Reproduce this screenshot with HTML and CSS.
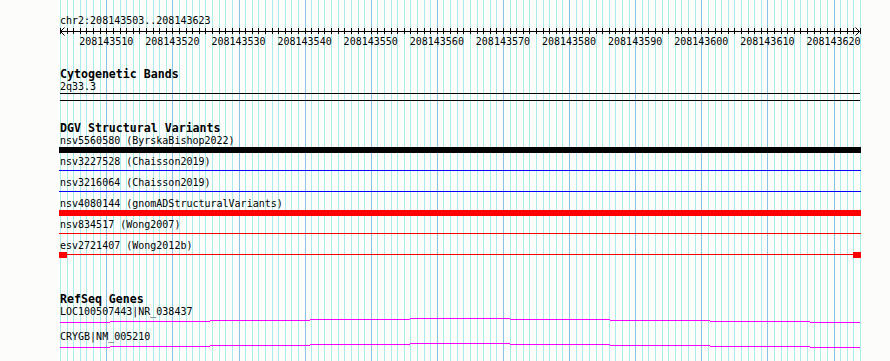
FILE: index.html
```html
<!DOCTYPE html>
<html>
  <head>
    <meta charset="UTF-8" />
    <title>chr2:208143503..208143623</title>
    <link rel="stylesheet" href="styles.css">
  </head>
  <body>
    <div class="panel">
      <!-- one column per base, darker every 10 bases -->
      <svg class="grid" width="801" height="361" viewBox="0 0 801 361" preserveAspectRatio="none">
        <defs>
          <path id="cols" d="M0.5 0v1M7.5 0v1M13.5 0v1M20.5 0v1M26.5 0v1M33.5 0v1M40.5 0v1M46.5 0v1M53.5 0v1M60.5 0v1M66.5 0v1M73.5 0v1M79.5 0v1M86.5 0v1M93.5 0v1M99.5 0v1M106.5 0v1M112.5 0v1M119.5 0v1M126.5 0v1M132.5 0v1M139.5 0v1M145.5 0v1M152.5 0v1M159.5 0v1M165.5 0v1M172.5 0v1M179.5 0v1M185.5 0v1M192.5 0v1M198.5 0v1M205.5 0v1M212.5 0v1M218.5 0v1M225.5 0v1M231.5 0v1M238.5 0v1M245.5 0v1M251.5 0v1M258.5 0v1M264.5 0v1M271.5 0v1M278.5 0v1M284.5 0v1M291.5 0v1M298.5 0v1M304.5 0v1M311.5 0v1M317.5 0v1M324.5 0v1M331.5 0v1M337.5 0v1M344.5 0v1M350.5 0v1M357.5 0v1M364.5 0v1M370.5 0v1M377.5 0v1M383.5 0v1M390.5 0v1M397.5 0v1M403.5 0v1M410.5 0v1M417.5 0v1M423.5 0v1M430.5 0v1M436.5 0v1M443.5 0v1M450.5 0v1M456.5 0v1M463.5 0v1M469.5 0v1M476.5 0v1M483.5 0v1M489.5 0v1M496.5 0v1M502.5 0v1M509.5 0v1M516.5 0v1M522.5 0v1M529.5 0v1M536.5 0v1M542.5 0v1M549.5 0v1M555.5 0v1M562.5 0v1M569.5 0v1M575.5 0v1M582.5 0v1M588.5 0v1M595.5 0v1M602.5 0v1M608.5 0v1M615.5 0v1M621.5 0v1M628.5 0v1M635.5 0v1M641.5 0v1M648.5 0v1M655.5 0v1M661.5 0v1M668.5 0v1M674.5 0v1M681.5 0v1M688.5 0v1M694.5 0v1M701.5 0v1M707.5 0v1M714.5 0v1M721.5 0v1M727.5 0v1M734.5 0v1M740.5 0v1M747.5 0v1M754.5 0v1M760.5 0v1M767.5 0v1M774.5 0v1M780.5 0v1M787.5 0v1M793.5 0v1M800.5 0v1" />
        </defs>
        <use href="#cols" class="minor" transform="scale(1 361)" />
        <path class="major" d="M46.5 0V361M112.5 0V361M179.5 0V361M245.5 0V361M311.5 0V361M377.5 0V361M443.5 0V361M509.5 0V361M575.5 0V361M641.5 0V361M707.5 0V361M774.5 0V361" />
      </svg>

      <div class="content">
        <div class="pos">chr2:208143503..208143623</div>
        <svg class="ruler" width="801" height="7" viewBox="0 0 801 7">
          <use href="#cols" class="tickmarks" transform="translate(0 1) scale(1 6)" />
          <path d="M0 4.5H800M4.5 0.5L0.5 4.5L4.5 8.5M795.5 0.5L799.5 4.5L795.5 8.5" stroke="#000" fill="none" />
        </svg>
        <div class="ticks">
          <span>208143510</span>
          <span>208143520</span>
          <span>208143530</span>
          <span>208143540</span>
          <span>208143550</span>
          <span>208143560</span>
          <span>208143570</span>
          <span>208143580</span>
          <span>208143590</span>
          <span>208143600</span>
          <span>208143610</span>
          <span>208143620</span>
        </div>

        <section class="track cyto">
          <h2 class="track-title">Cytogenetic Bands</h2>
          <div class="label">2q33.3</div>
          <div class="band"></div>
        </section>

        <section class="track dgv">
          <h2 class="track-title">DGV Structural Variants</h2>
          <div class="feature">
            <div class="label">nsv5560580 (ByrskaBishop2022)</div>
            <div class="glyph bar black"></div>
          </div>
          <div class="feature">
            <div class="label">nsv3227528 (Chaisson2019)</div>
            <div class="glyph line blue"></div>
          </div>
          <div class="feature">
            <div class="label">nsv3216064 (Chaisson2019)</div>
            <div class="glyph line blue"></div>
          </div>
          <div class="feature">
            <div class="label">nsv4080144 (gnomADStructuralVariants)</div>
            <div class="glyph bar red"></div>
          </div>
          <div class="feature">
            <div class="label">nsv834517 (Wong2007)</div>
            <div class="glyph line red"></div>
          </div>
          <div class="feature">
            <div class="label">esv2721407 (Wong2012b)</div>
            <div class="glyph line red ends"><span class="cap"></span><span class="cap"></span></div>
          </div>
        </section>

        <section class="track refseq">
          <h2 class="track-title">RefSeq Genes</h2>
          <div class="gene">
            <div class="label">LOC100507443|NR_038437</div>
            <svg class="gene-line" width="800" height="16" viewBox="0 0 800 16">
              <path d="M0 8.5H50M50 7.5H150M150 6.5H250M250 5.5H350M350 4.5H450M450 5.5H550M550 6.5H650M650 7.5H750M750 8.5H800" />
            </svg>
          </div>
          <div class="gene">
            <div class="label">CRYGB|NM_005210</div>
            <svg class="gene-line" width="800" height="16" viewBox="0 0 800 16">
              <path d="M0 8.5H50M50 7.5H150M150 6.5H250M250 5.5H350M350 4.5H450M450 5.5H550M550 6.5H650M650 7.5H750M750 8.5H800" />
            </svg>
          </div>
        </section>
      </div>
    </div>
  </body>
</html>
```

FILE: styles.css
```css
body {
  margin: 0;
  background: #fcfdfb;
  color: #000;
  font-family: "DejaVu Sans Mono", monospace;
  font-size: 10px;
}
.panel {
  display: grid;
  margin-left: 60px;
  width: 801px;
  min-height: 100vh;
}
.grid,
.content {
  grid-area: 1 / 1;
}
.grid {
  display: block;
  height: 100vh;
  shape-rendering: crispEdges;
}
.grid .minor {
  stroke: #a8ecec;
  stroke-width: 1;
  fill: none;
}
.grid .major {
  stroke: #88c4e6;
  stroke-width: 1;
  fill: none;
}
.pos {
  padding-top: 15px;
  line-height: 12px;
}
.ruler {
  display: block;
  overflow: visible;
}
.tickmarks {
  stroke: #000;
  stroke-width: 1;
  fill: none;
  shape-rendering: crispEdges;
}
.ticks {
  display: flex;
  margin-top: 1px;
  padding-left: 13.22px;
  line-height: 13px;
  white-space: nowrap;
}
.ticks span {
  flex: 0 0 66.116px;
  text-align: center;
}
.track-title {
  margin: 0;
  font-size: 11.6px;
  font-weight: bold;
  line-height: 12px;
  white-space: nowrap;
}
.label {
  line-height: 13px;
  white-space: nowrap;
}
.cyto {
  margin-top: 20px;
}
.band {
  width: 800px;
  height: 6px;
  border-top: 1px solid #000;
  border-bottom: 1px solid #000;
}
.dgv {
  margin-top: 21px;
}
.feature {
  margin-bottom: 2px;
}
.glyph {
  width: 802px;
  height: 6px;
  margin-left: -1px;
}
.bar.black {
  background: #000;
}
.bar.red {
  background: #f00;
}
.line.blue {
  background: linear-gradient(#00f, #00f) 0 2px / 100% 1px no-repeat;
}
.line.red {
  background: linear-gradient(#f00, #f00) 0 2px / 100% 1px no-repeat;
}
.ends {
  display: flex;
  justify-content: space-between;
}
.cap {
  width: 8px;
  height: 6px;
  background: #f00;
}
.refseq {
  margin-top: 36px;
}
.refseq .track-title {
  line-height: 11px;
}
.gene-line {
  display: block;
  margin-top: -4px;
  overflow: visible;
}
.gene-line path {
  stroke: #f0f;
  stroke-width: 1;
  fill: none;
  shape-rendering: crispEdges;
}
```
